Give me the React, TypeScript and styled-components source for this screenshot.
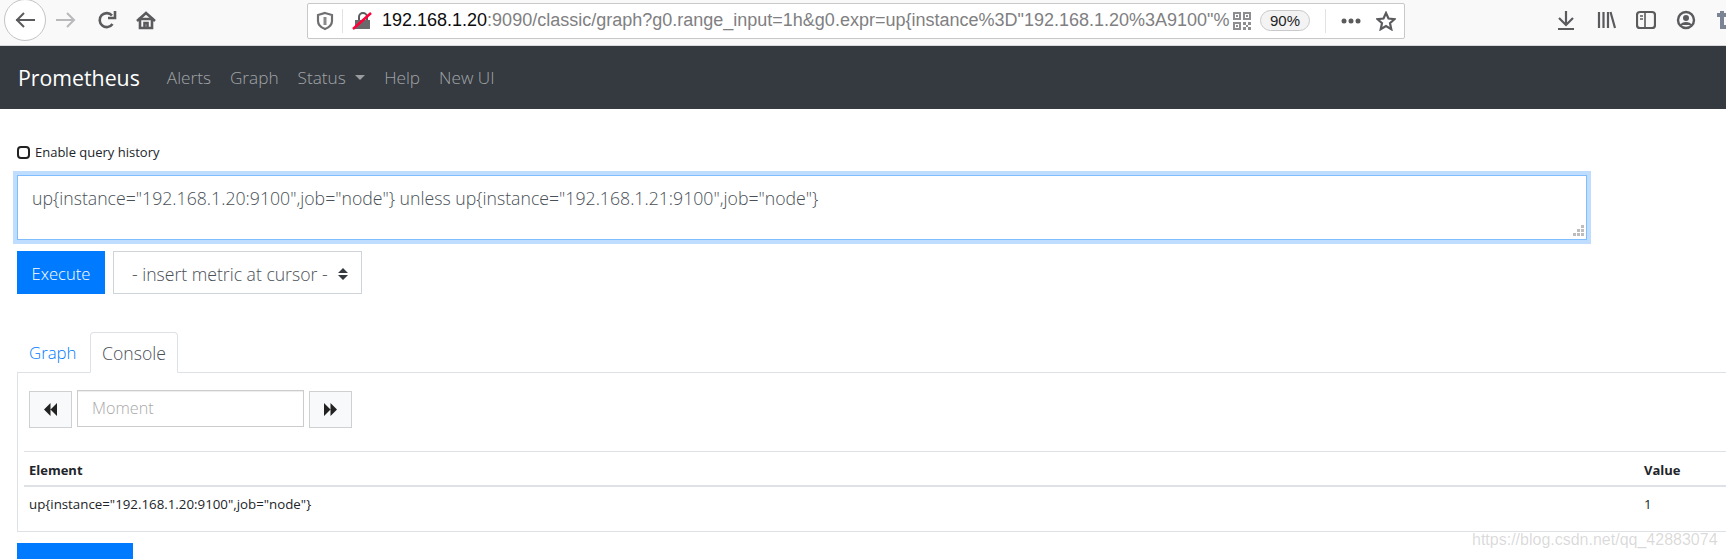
import React from "react";
import styled, { createGlobalStyle } from "styled-components";

const Global = createGlobalStyle`
  html, body { margin: 0; padding: 0; background: #fff; height: 559px; overflow: hidden; }
  body { font-family: "Open Sans", "Noto Sans", sans-serif; color: #212529; }
  * { box-sizing: border-box; }
`;
const Page = styled.div`position: relative; width: 1726px; height: 559px; overflow: hidden;`;
const Toolbar = styled.div`
  height: 46px; background: #f9f9fa; border-bottom: 1px solid #d8d8da;
  display: flex; align-items: center; padding-left: 4px;
`;
const BackBtn = styled.div`
  width: 42px; height: 42px; border-radius: 50%; border: 1px solid #c4c4c6; background: #fff;
  display: flex; align-items: center; justify-content: center; margin-bottom: 5px; flex: none;
`;
const ToolIcon = styled.div<{ $w?: number; $flush?: boolean }>`
  width: ${p => p.$w ?? 38}px; display: flex; justify-content: center; align-items: center;
  margin-bottom: ${p => (p.$flush ? 0 : 5)}px; flex: none;
`;
const UrlBar = styled.div`
  margin-left: 143px; width: 1098px; height: 36px; margin-bottom: 4px; background: #fff;
  border: 1px solid #c8c8ca; border-radius: 2px; display: flex; align-items: center; flex: none;
`;
const UrlSep = styled.div<{ $ml?: number }>`width: 1px; height: 24px; background: #e2e2e4; flex: none; margin-left: ${p => p.$ml ?? 0}px;`;
const UrlText = styled.div`
  font-family: "Liberation Sans", sans-serif; font-size: 18px; color: #808082; white-space: nowrap; overflow: hidden;
  width: 852px; flex: none; padding-left: 1px;
  b { font-weight: 400; color: #0c0c0d; }
`;
const ZoomPill = styled.div`
  width: 50px; height: 21px; border: 1px solid #c9c9cb; border-radius: 11px; background: #f3f3f4;
  font-family: "Liberation Sans", sans-serif; font-size: 15px; color: #222; display: flex; align-items: center; justify-content: center; margin-left: 9px; flex: none;
`;
const RightIcons = styled.div`display: flex; align-items: center; margin-left: 141px;`;
const Nav = styled.nav`
  height: 63px; background: #343a40; display: flex; align-items: center; padding-left: 18px;
`;
const Brand = styled.div`font-size: 21.3px; color: #fff; margin-right: 27px;`;
const NavLink = styled.div`
  font-size: 17.2px; font-weight: 300; color: rgba(255,255,255,.55); margin-right: 19px; display: flex; align-items: center;
`;
const Caret = styled.span`
  display: inline-block; margin-left: 9.5px; border-top: 5px solid rgba(255,255,255,.5);
  border-left: 5px solid transparent; border-right: 5px solid transparent;
`;
const Content = styled.main`padding: 36px 0 0 17px;`;
const HistoryRow = styled.label`
  display: flex; align-items: center; height: 14px; font-size: 13px; color: #212529;
`;
const Check = styled.span`
  width: 13px; height: 13px; border: 2.5px solid #222; border-radius: 4px; margin-right: 5px; background: #fff; flex: none;
`;
const Expr = styled.div`
  position: relative; margin-top: 16px; width: 1570px; height: 65px; border: 1px solid #80bdff;
  box-shadow: 0 0 0 4px #bfdeff; padding: 12px 14px; font-size: 17.7px; font-weight: 300; color: #495057; line-height: 20px; white-space: nowrap;
`;
const Grip = styled.svg`position: absolute; right: 2px; bottom: 2px;`;
const ActionRow = styled.div`display: flex; gap: 8px; margin-top: 11px;`;
const Execute = styled.div`
  width: 88px; height: 43px; background: #007bff; color: #fff; font-size: 16.6px; font-weight: 300; padding-top: 2px;
  display: flex; align-items: center; justify-content: center;
`;
const MetricSelect = styled.div`
  width: 249px; height: 43px; border: 1px solid #ced4da; color: #495057; font-size: 17.6px; font-weight: 300;
  display: flex; align-items: center; justify-content: space-between; padding: 2px 13px 0 18px;
`;
const Tabs = styled.div`
  display: flex; margin-top: 37px; height: 41px; align-items: flex-end; width: 1709px;
`;
const TabLink = styled.div`font-size: 16.8px; font-weight: 300; color: #007bff; padding: 0 14px 0 12px; height: 40px; line-height: 42px; width: 73px;`;
const TabActive = styled.div`
  width: 88px; height: 41px; border: 1px solid #dee2e6; border-bottom: 1px solid #fff; border-radius: 4px 4px 0 0;
  font-size: 17.6px; font-weight: 300; color: #495057; line-height: 41px; text-align: center; position: relative; z-index: 1; margin-bottom: -1px;
`;
const Panel = styled.section`
  width: 1730px; height: 160px; border: 1px solid #dee2e6; padding: 18px 0 0 6px;
`;
const MomentRow = styled.div`display: flex; align-items: flex-start; padding-left: 5px; height: 60px;`;
const StepBtn = styled.div`
  width: 43px; height: 37px; background: #f8f9fa; border: 1px solid #ced0d2; flex: none;
  display: flex; align-items: center; justify-content: center;
`;
const MomentInput = styled.div`
  width: 227px; height: 37px; margin: -1px 5px 0 5px; border: 1px solid #ccc; box-shadow: inset 0 1px 1px rgba(0,0,0,.075);
  padding-left: 14px; font-size: 16.2px; font-weight: 300; line-height: 34px; color: #a8a8a8;
`;
const DataTable = styled.table`
  border-collapse: collapse; width: 1720px; font-size: 13.3px; table-layout: fixed;
  th { text-align: left; font-weight: 700; font-size: 13px; height: 34px; padding: 4px 5px 0; border-top: 1px solid #dee2e6; border-bottom: 2px solid #dee2e6; }
  td { height: 44px; padding: 0 5px 8px; }
`;
const ValueCol = styled.col`width: 105px;`;
const AddGraph = styled.div`
  margin-top: 11px; width: 116px; height: 43px; background: #007bff; color: #fff; font-size: 16px;
  display: flex; align-items: center; justify-content: center;
`;
const Watermark = styled.div`
  position: absolute; left: 1472px; top: 531px; font-family: "Liberation Sans", sans-serif;
  font-size: 16px; color: rgba(120,120,120,.28); white-space: nowrap;
`;

const G = "#5b5b5e";
const Ic = ({ w = 20, h = 20, children }: { w?: number; h?: number; children: React.ReactNode }) => (
  <svg width={w} height={h} viewBox={`0 0 ${w} ${h}`} fill="none" stroke={G} strokeWidth={2}>{children}</svg>
);

export default function App() {
  return (
    <Page>
      <Global />
      <Toolbar>
        <BackBtn>
          <Ic><path d="M20 10H1M9 3l-7 7 7 7" /></Ic>
        </BackBtn>
        <ToolIcon $w={40}>
          <Ic><path d="M0 10h18M11 3l7 7-7 7" stroke="#b9b9bb" /></Ic>
        </ToolIcon>
        <ToolIcon $w={42}>
          <Ic><path d="M15.500 14a7 7 0 1 1-.5-8.500M18 1v7h-7" strokeWidth={2.6} /></Ic>
        </ToolIcon>
        <ToolIcon $w={36}>
          <Ic><path d="M1 11l9-8 9 8" strokeWidth={2.6} /><path d="M4 9v9h12V9z M8.500 18v-5h3v5" strokeWidth={2.6} /></Ic>
        </ToolIcon>
        <UrlBar>
          <ToolIcon $w={34} $flush>
            <Ic><path d="M10 2l7 2v6c0 4-3 6.500-7 8-4-1.500-7-4-7-8V4z" strokeWidth={2.2} stroke="#6f6f72" /><path d="M10 6v8" strokeWidth={3} stroke="#8a8a8c" /></Ic>
          </ToolIcon>
          <UrlSep />
          <ToolIcon $w={38} $flush>
            <Ic>
              <path d="M7 9V6a4 4 0 0 1 8 0v3" />
              <path d="M3 9h15v9H3z" fill="#6a6a6d" stroke="none" />
              <path d="M1 18L19 2" stroke="#ff0039" strokeWidth={2.4} />
            </Ic>
          </ToolIcon>
          <UrlText><b>192.168.1.20</b>:9090/classic/graph?g0.range_input=1h&amp;g0.expr=up{"{"}instance%3D"192.168.1.20%3A9100"%</UrlText>
          <svg width="18" height="18" viewBox="0 0 18 18" fill="#8e8e90">
            <path d="M0 0h8v8H0zM2 2v4h4V2zM10 0h8v8h-8zM12 2v4h4V2zM0 10h8v8H0zM2 12v4h4v-4zM3 3h2v2H3zM13 3h2v2h-2zM3 13h2v2H3zM10 10h3v3h-3zM15 10h3v3h-3zM13 13h2v2h-2zM10 15h3v3h-3zM15 15h3v3h-3z" fillRule="evenodd" />
          </svg>
          <ZoomPill>90%</ZoomPill>
          <UrlSep $ml={15} />
          <ToolIcon $w={50} $flush>
            <svg width="20" height="6" viewBox="0 0 20 6" fill={G}><circle cx="3" cy="3" r="2.500" /><circle cx="10" cy="3" r="2.500" /><circle cx="17" cy="3" r="2.500" /></svg>
          </ToolIcon>
          <Ic><path d="M10 2l2.500 5.500 6 .7-4.500 4 1.300 6L10 15l-5.300 3.200 1.300-6-4.500-4 6-.7z" strokeWidth={2.2} /></Ic>
        </UrlBar>
        <RightIcons>
          <ToolIcon $w={40}><Ic><path d="M10 1v13M3 8l7 7 7-7M2 19h16" strokeWidth={2.2} /></Ic></ToolIcon>
          <ToolIcon $w={40}><Ic><path d="M3 2v16M7.500 2v16M12 2v16M14.500 2l4.500 16" strokeWidth={2.2} /></Ic></ToolIcon>
          <ToolIcon $w={40}><Ic><rect x="1" y="2" width="18" height="16" rx="3" strokeWidth={2.2} /><path d="M9 2v16M4 6h3M4 9h3" strokeWidth={1.6} /></Ic></ToolIcon>
          <ToolIcon $w={40}><Ic><circle cx="10" cy="10" r="8" strokeWidth={2.4} /><circle cx="10" cy="8" r="3" fill={G} stroke="none" /><path d="M4 15c2-4 10-4 12 0z" fill={G} stroke="none" /></Ic></ToolIcon>
          <ToolIcon $w={40}><Ic><path d="M1 5h18M6 1v16h13" stroke="#7b8494" strokeWidth={4} /></Ic></ToolIcon>
        </RightIcons>
      </Toolbar>
      <Nav>
        <Brand>Prometheus</Brand>
        <NavLink>Alerts</NavLink>
        <NavLink>Graph</NavLink>
        <NavLink>Status<Caret /></NavLink>
        <NavLink>Help</NavLink>
        <NavLink>New UI</NavLink>
      </Nav>
      <Content>
        <HistoryRow><Check />Enable query history</HistoryRow>
        <Expr>
          {'up{instance="192.168.1.20:9100",job="node"} unless up{instance="192.168.1.21:9100",job="node"}'}
          <Grip width="12" height="12" viewBox="0 0 12 12" fill="#bdbdbd">
            <path d="M9 0h3v3H9zM5 4h3v3H5zM9 4h3v3H9zM1 8h3v3H1zM5 8h3v3H5zM9 8h3v3H9z" />
          </Grip>
        </Expr>
        <ActionRow>
          <Execute>Execute</Execute>
          <MetricSelect>
            - insert metric at cursor -
            <svg width="10" height="12" viewBox="0 0 10 12" fill="#343a40"><path d="M5 0l5 5H0zM5 12L0 7h10z" /></svg>
          </MetricSelect>
        </ActionRow>
        <Tabs>
          <TabLink>Graph</TabLink>
          <TabActive>Console</TabActive>
        </Tabs>
        <Panel>
          <MomentRow>
            <StepBtn><svg width="13" height="13" viewBox="0 0 12 12" fill="#222"><path d="M6 0v12L0 6zM12 0v12L6 6z" /></svg></StepBtn>
            <MomentInput>Moment</MomentInput>
            <StepBtn><svg width="13" height="13" viewBox="0 0 12 12" fill="#222"><path d="M0 0v12l6-6zM6 0v12l6-6z" /></svg></StepBtn>
          </MomentRow>
          <DataTable>
            <colgroup><col /><ValueCol /></colgroup>
            <thead><tr><th>Element</th><th>Value</th></tr></thead>
            <tbody><tr><td>{'up{instance="192.168.1.20:9100",job="node"}'}</td><td>1</td></tr></tbody>
          </DataTable>
        </Panel>
        <AddGraph>Add Graph</AddGraph>
      </Content>
      <Watermark>https://blog.csdn.net/qq_42883074</Watermark>
    </Page>
  );
}
